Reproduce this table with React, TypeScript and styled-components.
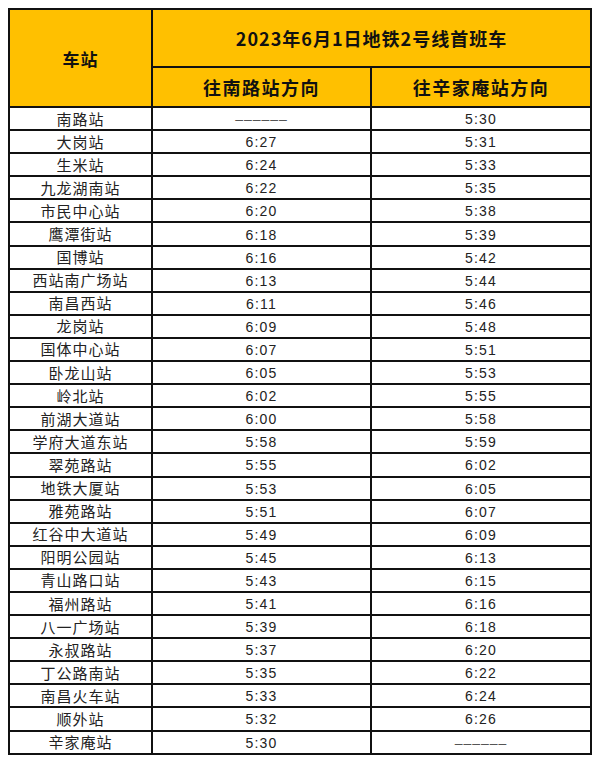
import { createGlobalStyle } from "styled-components";
import styled from "styled-components";

const GlobalStyle = createGlobalStyle`
  body {
    margin: 0;
    background: #ffffff;
    font-family: "Noto Sans CJK SC", "Noto Sans", sans-serif;
    color: #111;
  }
`;

const Page = styled.div`
  padding: 8px 10px 0 8px;
`;

const Table = styled.table`
  width: 582px;
  border-collapse: collapse;
  table-layout: fixed;
  border: 2px solid #111;
`;

const HeadCell = styled.th<{ $h?: number }>`
  background: #ffc000;
  border: 2px solid #111;
  height: ${p => p.$h ?? 38}px;
  padding: 0;
  font-size: 18px;
  font-weight: 700;
  letter-spacing: 1.5px;
  text-align: center;
  vertical-align: middle;
`;

const StationHead = styled(HeadCell)`
  font-size: 17px;
  letter-spacing: 1px;
`;

const Title = styled(HeadCell)`
  font-size: 18px;
  letter-spacing: 1px;
`;

const Cell = styled.td`
  border: 2px solid #111;
  height: 21.1px;
  padding: 0;
  text-align: center;
  vertical-align: middle;
  font-size: 15px;
  line-height: 18px;
  letter-spacing: 1px;
  color: #222;
`;

const Time = styled.span`
  font-family: "Liberation Sans", Arial, sans-serif;
  font-size: 14px;
  letter-spacing: 1.2px;
`;

const Dash = styled.span`
  font-family: "Liberation Sans", Arial, sans-serif;
  font-size: 14px;
  letter-spacing: 1px;
  color: #555;
`;

type Row = { name: string; south: string; west: string };

const rows: Row[] = [
  { name: "南路站", south: "------", west: "5:30" },
  { name: "大岗站", south: "6:27", west: "5:31" },
  { name: "生米站", south: "6:24", west: "5:33" },
  { name: "九龙湖南站", south: "6:22", west: "5:35" },
  { name: "市民中心站", south: "6:20", west: "5:38" },
  { name: "鹰潭街站", south: "6:18", west: "5:39" },
  { name: "国博站", south: "6:16", west: "5:42" },
  { name: "西站南广场站", south: "6:13", west: "5:44" },
  { name: "南昌西站", south: "6:11", west: "5:46" },
  { name: "龙岗站", south: "6:09", west: "5:48" },
  { name: "国体中心站", south: "6:07", west: "5:51" },
  { name: "卧龙山站", south: "6:05", west: "5:53" },
  { name: "岭北站", south: "6:02", west: "5:55" },
  { name: "前湖大道站", south: "6:00", west: "5:58" },
  { name: "学府大道东站", south: "5:58", west: "5:59" },
  { name: "翠苑路站", south: "5:55", west: "6:02" },
  { name: "地铁大厦站", south: "5:53", west: "6:05" },
  { name: "雅苑路站", south: "5:51", west: "6:07" },
  { name: "红谷中大道站", south: "5:49", west: "6:09" },
  { name: "阳明公园站", south: "5:45", west: "6:13" },
  { name: "青山路口站", south: "5:43", west: "6:15" },
  { name: "福州路站", south: "5:41", west: "6:16" },
  { name: "八一广场站", south: "5:39", west: "6:18" },
  { name: "永叔路站", south: "5:37", west: "6:20" },
  { name: "丁公路南站", south: "5:35", west: "6:22" },
  { name: "南昌火车站", south: "5:33", west: "6:24" },
  { name: "顺外站", south: "5:32", west: "6:26" },
  { name: "辛家庵站", south: "5:30", west: "------" },
];

function TimeCell({ value }: { value: string }) {
  if (value.startsWith("-")) {
    return (
      <Cell>
        <Dash>––––––</Dash>
      </Cell>
    );
  }
  return (
    <Cell>
      <Time>{value}</Time>
    </Cell>
  );
}

export default function App() {
  return (
    <Page>
      <GlobalStyle />
      <Table>
        <colgroup>
          <col style={{ width: 143 }} />
          <col style={{ width: 219 }} />
          <col style={{ width: 220 }} />
        </colgroup>
        <thead>
          <tr>
            <StationHead rowSpan={2} $h={56}>车站</StationHead>
            <Title colSpan={2} $h={56}>2023年6月1日地铁2号线首班车</Title>
          </tr>
          <tr>
            <HeadCell>往南路站方向</HeadCell>
            <HeadCell>往辛家庵站方向</HeadCell>
          </tr>
        </thead>
        <tbody>
          {rows.map(r => (
            <tr key={r.name}>
              <Cell>{r.name}</Cell>
              <TimeCell value={r.south} />
              <TimeCell value={r.west} />
            </tr>
          ))}
        </tbody>
      </Table>
    </Page>
  );
}
